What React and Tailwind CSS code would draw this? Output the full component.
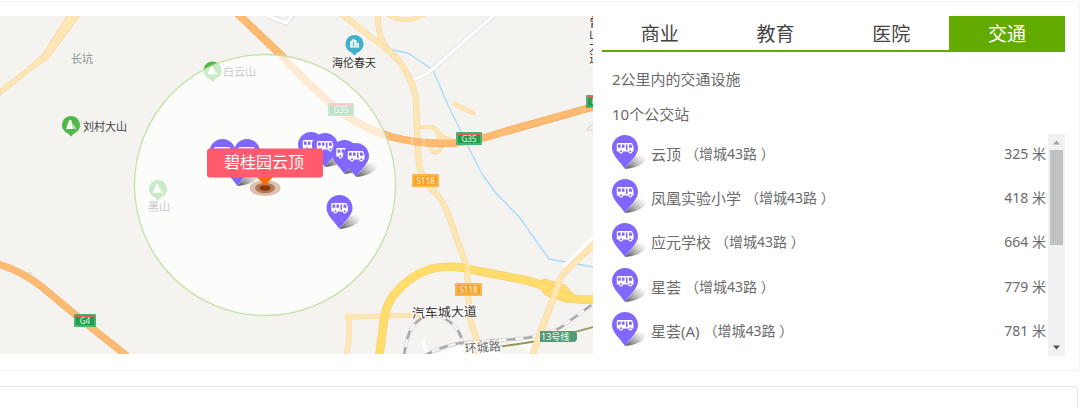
import { useState } from "react";

const TABS = ["商业", "教育", "医院", "交通"];

const STOPS = [
  { name: "云顶", line: "增城43路", distance: 325 },
  { name: "凤凰实验小学", line: "增城43路", distance: 418 },
  { name: "应元学校", line: "增城43路", distance: 664 },
  { name: "星荟", line: "增城43路", distance: 779 },
  { name: "星荟(A)", line: "增城43路", distance: 781 },
];

const MAP_PINS = [
  [209.5, 139],
  [234, 139],
  [224.5, 152],
  [298, 132],
  [312, 133],
  [331.5, 140],
  [343, 143],
  [326.5, 195],
];

const RAIL_LOOP = "M404 356Q407 335 412 327Q422 315 432 315Q448 317 457 329Q462 336 463 346";
const RAIL_MAIN = "M424 356Q440 347 460 343L517 339Q540 337 560 328L594 303";

function PinShape() {
  return (
    <>
      <path d="M13 34 L23 22 Q28 18.500 32.500 21 Q36 24 31 28 Q25 33 13 34Z" fill="url(#pin-shadow)" />
      <path d="M13 0 C20.200 0 26 5.800 26 13 C26 20 19 25.500 13 34 C7 25.500 0 20 0 13 C0 5.800 5.800 0 13 0Z" fill="#8167ff" />
      <path
        fillRule="evenodd"
        fill="#fff"
        d="M5.500 8H20l1.500 4v4.500h-1.200a2 2 0 0 1-4 0H11a2 2 0 0 1-4 0H4.800V9Z M6 9.500v3.200h2.700v-3.200Z M10 9.500v3.200h2.500v-3.200Z M14 9.500v5.500h1.500v-5.500Z M17 9.500v3.200h3.200l-.8-3.200Z M8 16.300a1 1 0 1 0 2 0a1 1 0 1 0-2 0Z M17.300 16.300a1 1 0 1 0 2 0a1 1 0 1 0-2 0Z"
      />
    </>
  );
}

function BusPin() {
  return (
    <svg viewBox="0 0 35 35" className="h-[35px] w-[35px] shrink-0" aria-hidden="true">
      <PinShape />
    </svg>
  );
}

function Road({ d, width, fill, edge, cap = "butt" }) {
  return (
    <g fill="none" strokeLinejoin="round" strokeLinecap={cap}>
      <path d={d} stroke={edge} strokeWidth={width} />
      <path d={d} stroke={fill} strokeWidth={width - 1.2} />
    </g>
  );
}

function Railway({ d }) {
  return (
    <g fill="none">
      <path d={d} stroke="#cdcdcd" strokeWidth="3.400" />
      <path d={d} stroke="#fafafa" strokeWidth="2.200" />
      <path d={d} stroke="#a6a6a6" strokeWidth="2.200" strokeDasharray="9 8" />
    </g>
  );
}

function Hill({ x, y }) {
  return (
    <g transform={`translate(${x} ${y})`}>
      <path d="M0-9a9 9 0 0 1 3 17.500L0 11.500L-3 8.500A9 9 0 0 1 0-9Z" fill="#4fb848" />
      <path d="M-5 4L-1.800-5H.4L2.200 4Z M1.800-1.500L5 4H3Z" fill="#fff" />
    </g>
  );
}

function Shield({ x, y, w = 26, text, green }) {
  return (
    <g>
      <rect x={x} y={y} width={w} height="13" rx="1.500" fill={green ? "#1f9f4c" : "#f7a22b"} />
      <rect x={x + 1} y={y + 1} width={w - 2} height="11" rx="1" fill="none" stroke={green ? "#8fd0a5" : "#ffd28a"} strokeWidth=".8" />
      {green && <rect x={x + 1.5} y={y + 1} width={w - 3} height="2" fill="#f0555a" />}
      <text x={x + w / 2} y={y + 10} fontSize="8" textAnchor="middle" fill={green ? "#e6f8eb" : "#fff3d6"}>
        {text}
      </text>
    </g>
  );
}

const CREAM = { fill: "#ffe6b5", edge: "#f8d69c" };
const ORANGE = { fill: "#ffbb72", edge: "#f3a557" };

function AreaMap() {
  return (
    <svg
      viewBox="0 16 593 338"
      preserveAspectRatio="xMinYMin slice"
      className="block h-[338px] w-full bg-[#f4f3ef] font-['Noto_Sans','Noto_Sans_CJK_SC',sans-serif]"
      role="img"
      aria-label="碧桂园云顶"
    >
      <defs>
        <linearGradient id="pin-shadow" x1="0" y1="1" x2="1" y2="0.3">
          <stop offset="0" stopColor="#333" stopOpacity=".9" />
          <stop offset=".5" stopColor="#666" stopOpacity=".5" />
          <stop offset="1" stopColor="#999" stopOpacity=".08" />
        </linearGradient>
      </defs>

      {/* rivers */}
      <path
        d="M345 16L387 49L408 53L433 70L448 105L470 150L482 174L495 192L520 218L549 259L593 267"
        fill="none"
        stroke="#a9dcfb"
        strokeWidth="1.400"
      />

      {/* minor roads */}
      <path d="M268 16L286 23L293 14" fill="none" stroke="#d7d7d7" strokeWidth="5" />
      <path d="M268 16L286 23L293 14" fill="none" stroke="#fff" strokeWidth="3.500" />
      <Road d="M413 80L428 73L460 45L495 14" width={4.5} fill="#fff" edge="#dedede" />
      <path d="M68 14H81L48 59L33 69L0 95V89L30 66L43 54Z" fill="#ffe6b5" stroke="#f6d193" strokeWidth=".7" />
      <Road d="M25 273H32M27 276H32" width={1.6} fill="#e6e6e6" edge="#d9d9d9" />
      <path d="M587 130q0-3 3-3q1-3 4-2M587 130H593" fill="none" stroke="#d2d2d2" />

      {/* railways and metro */}
      <path d="M430 356L462 344L498 341L503 356Z" fill="#fdfdfd" />
      <path d="M512 342L545 339L538 345L534 356H529Q528 346 512 342Z" fill="#fff" />
      <path d="M423 340Q424 350 431 356" stroke="#fff" strokeWidth="3" fill="none" />
      <Railway d={RAIL_LOOP} />
      <Railway d={RAIL_MAIN} />
      <path d="M498 347L545 340L593 327" stroke="#94945c" strokeWidth="1.800" fill="none" />

      {/* local roads */}
      <Road d="M346 356L349 340L349 317L420 315" width={5} {...CREAM} />
      <circle cx="348.500" cy="317" r="4" fill="#ffe6b5" />
      <Road d="M388 15Q406 25 425 14" width={4.5} {...CREAM} />
      <Road d="M378 14Q377 38 389 51L400 62" width={5.5} {...CREAM} />
      <Road d="M455 104L473 113" width={4.500} {...CREAM} cap="round" />
      <Road d="M419 127H432Q438 129 439 138Q436 142 430 146Q431 153 437 152Q442 149 442 141M436 130Q443 139 452 140" width={4} {...CREAM} />
      <Road d="M339 12L385 48Q396 56 401 64Q414 82 416 100L417 130L419 165Q421 178 432 189Q443 200 449 216L467 268L469 310Q470 322 475 333Q477 340 475 356" width={6} {...CREAM} />

      {/* expressways */}
      <Road d="M236 12L262 37L281 55L300 75L330 103Q360 128 392 137Q422 145 455 143Q476 141 500 133L596 106" width={7.5} {...ORANGE} />
      <path d="M412 138V145M424 139V146" stroke="#ffe6b5" strokeWidth="2" opacity=".5" />
      <Road d="M-2 264Q22 271 42 287L78 317L127 356" width={7} {...ORANGE} />
      <path d="M536 282L545 279L565 285L577 298L568 303L545 295Z" fill="#ffdc75" stroke="#f5cb6b" strokeWidth=".8" />
      <Road d="M379 358L384 320Q386 302 398 290Q420 267 446 267Q458 266 478 271L525 280Q538 283 550 289Q568 299 580 299.500H596" width={8.500} fill="#ffdd6b" edge="#f6cd6c" />
      <path d="M467 262L469 276" stroke="#ffe8b8" strokeWidth="5" opacity=".7" />
      <path d="M596 239L566 268" stroke="#fff" strokeWidth="9" />
      <Road d="M596 242L567 270Q560 277 557 288L544 323L532 356" width={6.500} {...CREAM} />

      <Hill x={71} y={125} />
      <Hill x={212.500} y={70.500} />
      <Hill x={158} y={189} />
      <g fontSize="11">
        <text x="83" y="131" fill="#444">刘村大山</text>
        <text x="71" y="63" fill="#80938e">长坑</text>
        <text x="223" y="76" fill="#445">白云山</text>
        <text x="148" y="211" fill="#445">黑山</text>
      </g>
      <Shield x={328} y={103} text="G35" green />

      {/* search radius */}
      <circle cx="265" cy="185" r="130.500" fill="#fff" fillOpacity=".7" stroke="#c6e0a6" strokeWidth="1.300" />

      <g transform="translate(354.500 44)">
        <path d="M0-9a9 9 0 0 1 3 17.500L0 11.500L-3 8.500A9 9 0 0 1 0-9Z" fill="#41b0cd" />
        <path d="M-4.500 3.500V-2L-1.500-5L2-3.500V-1H4.500V3.500Z" fill="#fff" />
        <path d="M-3 -1H1M-3 1.200H4M-1-3.500V3" stroke="#41b0cd" strokeWidth=".6" />
      </g>
      <text x="332" y="67" fontSize="11" fill="#333">海伦春天</text>

      <Shield x={456} y={132} text="G35" green />
      <Shield x={586} y={95} text="G35" green />
      <Shield x={74} y={314} w={22} text="G4" green />
      <Shield x={412} y={174} w={27} text="S118" />
      <Shield x={455} y={283} w={27} text="S118" />

      <g fill="#333" stroke="#fff" strokeWidth="2" paintOrder="stroke">
        <text x="412" y="318" fontSize="13" transform="rotate(-2 412 318)">汽车城大道</text>
        <text x="465" y="353" fontSize="12" fill="#666" transform="rotate(-4 465 353)">环城路</text>
        <text x="594" y="16" fontSize="12" style={{ writingMode: "vertical-rl" }}>曾山大道</text>
      </g>

      <path d="M540 331H573Q577 331 577 335V338Q577 342 573 342H540Z" fill="#559b77" />
      <text x="541" y="340" fontSize="9" fill="#eafff2">13号线</text>

      {MAP_PINS.map(([x, y]) => (
        <g key={`${x}-${y}`} transform={`translate(${x} ${y})`}>
          <PinShape />
        </g>
      ))}

      {/* centre marker */}
      <ellipse cx="265" cy="188" rx="15.500" ry="8" fill="#dcc0b0" />
      <ellipse cx="265" cy="188" rx="10" ry="5.200" fill="#b5795a" />
      <ellipse cx="265" cy="188" rx="5.500" ry="2.800" fill="#8c3606" />
      <path d="M256 176H274L265 185.500Z" fill="#ff6a00" />
      <rect x="207" y="148.500" width="116" height="29" rx="3" fill="#ff5b6c" />
      <text x="264" y="168" fontSize="16" textAnchor="middle" fill="#fff">碧桂园云顶</text>
    </svg>
  );
}

function Scrollbar() {
  return (
    <div className="flex w-[17px] shrink-0 flex-col items-center bg-[#f1f1f1]" aria-hidden="true">
      <svg viewBox="0 0 17 16" className="h-4 w-[17px]">
        <path d="M5 10.500L8.500 6.500L12 10.500Z" fill="#a3a3a3" />
      </svg>
      <div className="h-[95px] w-[13px] bg-[#c1c1c1]" />
      <svg viewBox="0 0 17 16" className="mt-auto h-4 w-[17px]">
        <path d="M5 5.500L8.500 9.500L12 5.500Z" fill="#505050" />
      </svg>
    </div>
  );
}

export default function App() {
  const [active, setActive] = useState("交通");

  return (
    <main className="bg-white pt-px font-['Noto_Sans','Noto_Sans_CJK_SC',sans-serif] text-[#6b6b6b]">
      <section className="grid grid-cols-[593fr_463fr] items-start gap-[9px] rounded-r border-y border-r border-[#f3f3f3] py-[14px] pr-[14px]">
        <AreaMap />

        <div>
          <div role="tablist" className="grid grid-cols-4 border-b-2 border-[#62ab00]">
            {TABS.map((tab) => (
              <button
                key={tab}
                type="button"
                role="tab"
                aria-selected={tab === active}
                onClick={() => setActive(tab)}
                className={
                  tab === active
                    ? "h-[34px] bg-[#62ab00] text-[19px] leading-[36px] text-white"
                    : "h-[34px] text-[19px] leading-[36px] text-[#444]"
                }
              >
                {tab}
              </button>
            ))}
          </div>

          <div className="pt-[10px] pl-[10px] text-[15px] leading-[35px]">
            <h2>2公里内的交通设施</h2>
            <h3>10个公交站</h3>
          </div>

          <div className="mt-[2px] flex">
            <ul className="grid min-h-[222px] flex-1 grid-rows-5 pt-px pr-[2px] pl-[10px]">
              {STOPS.map((stop) => (
                <li key={stop.name} className="flex items-start">
                  <BusPin />
                  <span className="ml-1 text-[15px] leading-[38px]">{stop.name}</span>
                  <span className="ml-1 text-[14px] leading-[38px]">（{stop.line} ）</span>
                  <span className="ml-auto text-[14px] leading-[38px]">{stop.distance} 米</span>
                </li>
              ))}
            </ul>
            <Scrollbar />
          </div>
        </div>
      </section>

      <section className="mt-[15px] mr-[2px] min-h-[22px] rounded-tr border-t border-r border-[#e6e6e6]" />
    </main>
  );
}
